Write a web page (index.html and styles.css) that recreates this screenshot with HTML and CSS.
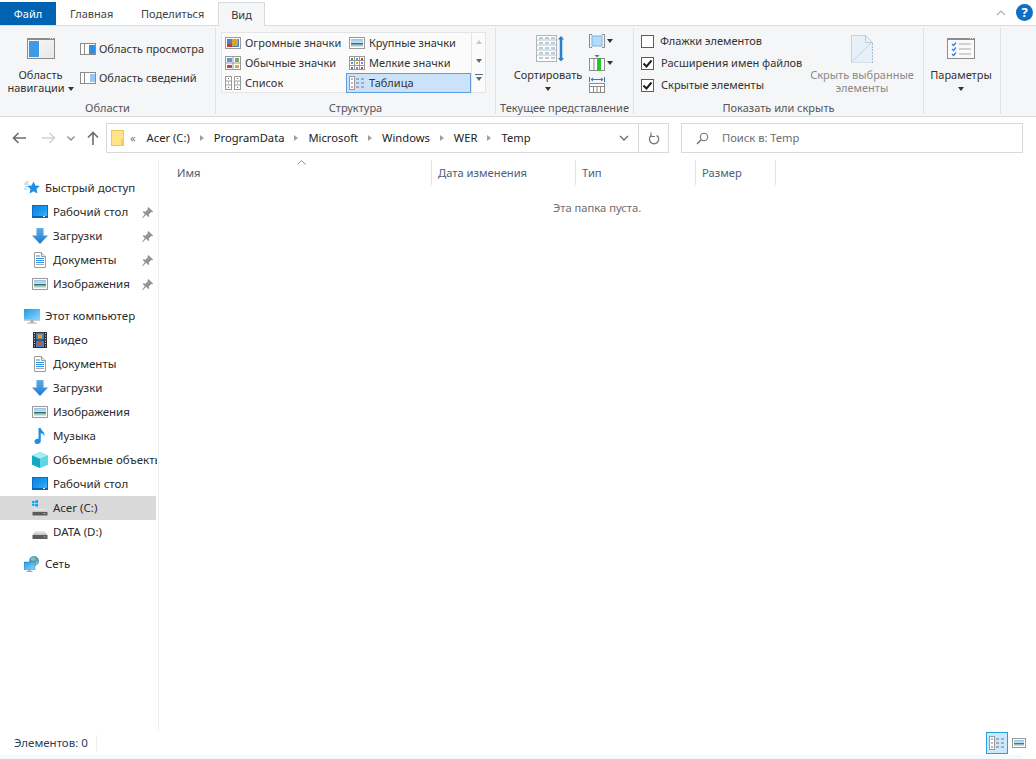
FILE: index.html
```html
<!DOCTYPE html>
<html lang="ru">
<head>
<meta charset="utf-8">
<title>Temp</title>
<link rel="stylesheet" href="styles.css">
</head>
<body>
<svg class="defs" xmlns="http://www.w3.org/2000/svg">
  <defs>
    <linearGradient id="gDesk" x1="0" y1="0" x2="1" y2="1"><stop offset="0" stop-color="#0b7fdc"/><stop offset="0.6" stop-color="#1f9cf0"/><stop offset="1" stop-color="#49b7f5"/></linearGradient>
    <linearGradient id="gArrow" x1="0" y1="0" x2="0" y2="1"><stop offset="0" stop-color="#63aee8"/><stop offset="1" stop-color="#1b78cc"/></linearGradient>
    <linearGradient id="gSky" x1="0" y1="0" x2="0" y2="1"><stop offset="0" stop-color="#8fc4f0"/><stop offset="0.45" stop-color="#c4e0f6"/><stop offset="0.55" stop-color="#2f6f5c"/><stop offset="0.7" stop-color="#7fb0a8"/><stop offset="1" stop-color="#e6f2f8"/></linearGradient>
    <linearGradient id="gScreen" x1="0" y1="0" x2="1" y2="1"><stop offset="0" stop-color="#1c9ae8"/><stop offset="1" stop-color="#8ed6f8"/></linearGradient>
    <linearGradient id="gDrive" x1="0" y1="0" x2="0" y2="1"><stop offset="0" stop-color="#f2f2f2"/><stop offset="1" stop-color="#bfbfbf"/></linearGradient>
    <linearGradient id="gPane" x1="0" y1="0" x2="1" y2="1"><stop offset="0" stop-color="#fafafa"/><stop offset="1" stop-color="#e6e6e6"/></linearGradient>
    <symbol id="i-desk" viewBox="0 0 16 16"><rect x="0.500" y="1.500" width="15" height="12" fill="url(#gDesk)" stroke="#0a6fc4"/><rect x="1" y="12" width="14" height="1.500" fill="#0b5fa8"/><rect x="11" y="12" width="2" height="1" fill="#dff"/></symbol>
    <symbol id="i-down" viewBox="0 0 16 16"><path d="M4.500 0h7v7.500H16L8 16 0 7.500h4.500z" fill="url(#gArrow)"/></symbol>
    <symbol id="i-doc" viewBox="0 0 16 16"><path d="M2.500.5h7l4 4v11h-11z" fill="#fff" stroke="#9c9c9c"/><path d="M9.500.5v4h4" fill="#e8e8e8" stroke="#9c9c9c"/><path d="M4 4h4M4 6.500h8M4 8.500h8M4 10.500h8" stroke="#2f8fe0"/><path d="M4 12.500h8" stroke="#a8a8a8"/></symbol>
    <symbol id="i-pic" viewBox="0 0 16 16"><rect x="0.500" y="2.500" width="15" height="11" fill="#fff" stroke="#9a9a9a"/><rect x="2" y="4" width="12" height="8" fill="url(#gSky)"/></symbol>
    <symbol id="i-pc" viewBox="0 0 16 16"><rect x="0" y="1" width="16" height="10.500" fill="url(#gScreen)"/><rect x="0" y="11.500" width="16" height="1" fill="#8a9aa6"/><rect x="6.500" y="12.500" width="3" height="2" fill="#9aa4ac"/><rect x="3.500" y="14.500" width="9" height="1" fill="#9aa4ac"/></symbol>
    <symbol id="i-video" viewBox="0 0 16 16"><rect x="1" y="0" width="14" height="16" fill="#2e2e2e"/><path d="M2 1.500h1M2 4h1M2 6.500h1M2 9h1M2 11.500h1M2 14h1M13 1.500h1M13 4h1M13 6.500h1M13 9h1M13 11.500h1M13 14h1" stroke="#d8d8d8"/><rect x="4" y="1" width="8" height="6.500" fill="#3f7fd0"/><rect x="4" y="8.500" width="8" height="6.500" fill="#3f7fd0"/><rect x="6" y="2.500" width="4" height="4" fill="#e0a020"/><rect x="6" y="10" width="4" height="4" fill="#c85a30"/></symbol>
    <symbol id="i-music" viewBox="0 0 16 16"><path d="M6.500 0h2.200c.3 2.600 4.300 3.600 3.800 8.500-.6-2-2-3-3.700-3.300V13c0 1.800-1.600 3-3.300 3S2.500 15 2.500 13.400 4.200 10.800 5.500 10.800c.4 0 .7 0 1 .2z" fill="#1e8fe6"/></symbol>
    <symbol id="i-cube" viewBox="0 0 16 16"><path d="M8 0l8 3.500v9L8 16 0 12.500v-9z" fill="#3cc6d8"/><path d="M8 0l8 3.500L8 7 0 3.500z" fill="#a6ecf2"/><path d="M0 3.500L8 7v9L0 12.500z" fill="#12a9c4"/><path d="M8 7l8-3.500v9L8 16z" fill="#5fd6e2"/></symbol>
    <symbol id="i-drive" viewBox="0 0 16 16"><path d="M3 7h10l2.500 4H.5z" fill="url(#gDrive)"/><rect x="0.500" y="11" width="15" height="4" rx="0.500" fill="#5c5c5c"/><rect x="11.500" y="12.500" width="2" height="1" fill="#58e04a"/></symbol>
    <symbol id="i-driveC" viewBox="0 0 16 16"><path d="M3 9h10l2.500 3H.5z" fill="url(#gDrive)"/><rect x="0.500" y="12" width="15" height="3.500" rx="0.500" fill="#5c5c5c"/><rect x="11.500" y="13" width="2" height="1" fill="#58e04a"/><path d="M0 1.200l2.500-.5V3H0zM3.200.6L6 0v3H3.200zM0 3.800h2.500v2.300L0 5.600zM3.200 3.800H6V6.700l-2.800-.5z" fill="#12a0ea"/></symbol>
    <symbol id="i-net" viewBox="0 0 16 16"><circle cx="10" cy="5" r="5" fill="#4f9ad8"/><path d="M7 2l3-1 2 2-2 2-3-1zM11 6l3-1-1 4h-2z" fill="#8cc77a"/><rect x="0" y="6" width="11" height="7.500" fill="url(#gScreen)" stroke="#2a78b8" stroke-width="0.500"/><rect x="4.500" y="13.500" width="2" height="1.500" fill="#9aa4ac"/><rect x="2.500" y="15" width="6" height="1" fill="#9aa4ac"/></symbol>
    <symbol id="i-star" viewBox="0 0 16 16"><path d="M9.500 1.500l1.900 4.100 4.400.5-3.300 3 .9 4.400-3.900-2.200-3.900 2.200.9-4.400-3.300-3 4.400-.5z" fill="#1f8fe6"/><path d="M0 4h4.500M1 6.500h2.500M0 9h3M1.500 2h3" stroke="#8cc6f0"/></symbol>
    <symbol id="i-pin" viewBox="0 0 12 12"><path d="M7 0l5 5-1 1-1-.5-2.500 2.500.5 2-1 1-2.500-2.500L1 12l-1-.2 3.200-3.800L.8 5.600l1-1 2 .5L6.500 2.500 6 1.500z" fill="#8d9399"/></symbol>
    <symbol id="i-list" viewBox="0 0 16 14"><rect x="0.500" y="0.500" width="5" height="13" fill="#fff" stroke="#9a9a9a"/><path d="M2 3h2M2 7h2" stroke="#777"/><path d="M2 11h2" stroke="#d33"/><path d="M7 3h3M12 3h3M7 7h3M12 7h3M7 11h3M12 11h3" stroke="#777"/></symbol>
    <symbol id="i-check" viewBox="0 0 13 13"><rect x="0.500" y="0.500" width="12" height="12" fill="#fff" stroke="#44618c"/><path d="M2.500 6.500l3 3 5-6" fill="none" stroke="#1f1f1f" stroke-width="2"/></symbol>
  </defs>
</svg>

<div class="window">
  <nav class="tabs">
    <span class="tab tab-file">Файл</span>
    <span class="tab tab-home">Главная</span>
    <span class="tab tab-share">Поделиться</span>
    <span class="tab tab-active">Вид</span>
    <span class="tab-spacer"></span>
    <svg class="chev-up" width="10" height="6" viewBox="0 0 10 6"><path d="M1 5l4-4 4 4" fill="none" stroke="#b4b4b4" stroke-width="1.200"/></svg>
    <span class="help">?</span>
  </nav>

  <section class="ribbon">
    <div class="group g-panes">
      <div class="group-body">
        <div class="big big-nav">
          <svg class="big-icon" width="28" height="21" viewBox="0 0 28 21"><rect x="0.500" y="0.500" width="27" height="20" fill="url(#gPane)" stroke="#8c8c8c"/><rect x="0" y="0" width="28" height="2" fill="#8c8c8c"/><rect x="2" y="3" width="10" height="16" fill="#3f9ae6"/><rect x="12" y="2" width="1" height="17" fill="#fff"/><path d="M23 .5h1M25 .5h1" stroke="#e8e8e8"/></svg>
          <span class="big-text">Область<br>навигации <i class="caret"></i></span>
        </div>
        <div class="stack-panes">
          <div class="small"><svg width="16" height="12" viewBox="0 0 16 12"><rect x="0.500" y="0.500" width="15" height="11" fill="#fff" stroke="#8c8c8c"/><rect x="4" y="1" width="1" height="10" fill="#8c8c8c"/><rect x="9" y="2" width="6" height="9" fill="#2f8fe0"/></svg><span>Область просмотра</span></div>
          <div class="small"><svg width="16" height="12" viewBox="0 0 16 12"><rect x="0.500" y="0.500" width="15" height="11" fill="#fff" stroke="#8c8c8c"/><rect x="4" y="1" width="1" height="10" fill="#8c8c8c"/><path d="M10 3h5M10 5h5M10 7h5M10 9h5" stroke="#2f8fe0"/></svg><span>Область сведений</span></div>
        </div>
      </div>
      <div class="group-label">Области</div>
    </div>

    <div class="group g-layout">
      <div class="group-body">
        <div class="gallery">
          <div class="gallery-grid">
            <div class="g-item"><svg width="16" height="12" viewBox="0 0 16 12"><rect x="0.500" y="0.500" width="15" height="11" fill="#fff" stroke="#9a9a9a"/><rect x="2" y="2" width="12" height="8" fill="#4f7fc4"/><rect x="7" y="2" width="6" height="7" fill="#d9a820"/><rect x="2" y="7" width="5" height="3" fill="#c43c30"/></svg><span>Огромные значки</span></div>
            <div class="g-item"><svg width="16" height="12" viewBox="0 0 16 12"><rect x="0.500" y="0.500" width="15" height="11" fill="#fff" stroke="#9a9a9a"/><rect x="2" y="2" width="12" height="8" fill="url(#gSky)"/></svg><span>Крупные значки</span></div>
            <div class="g-item"><svg width="16" height="14" viewBox="0 0 16 14"><rect x="0.500" y="0.500" width="15" height="13" fill="#fff" stroke="#9a9a9a"/><path d="M8 0v14M0 7h16" stroke="#9a9a9a"/><rect x="2" y="2" width="5" height="4" fill="#5a98d8"/><rect x="10" y="2" width="4" height="4" fill="#78a868"/><rect x="2" y="9" width="5" height="3" fill="#c8443c"/><rect x="10" y="9" width="4" height="3" fill="#d8a830"/></svg><span>Обычные значки</span></div>
            <div class="g-item"><svg width="16" height="14" viewBox="0 0 16 14"><rect x="0.500" y="0.500" width="15" height="13" fill="#fff" stroke="#9a9a9a"/><path d="M5.500 0v14M10.500 0v14M0 4.500h16M0 9.500h16" stroke="#9a9a9a"/><rect x="2" y="2" width="2" height="2" fill="#5a8868"/><rect x="7" y="2" width="2" height="2" fill="#5a98d8"/><rect x="12" y="2" width="2" height="2" fill="#c8443c"/><rect x="2" y="6" width="2" height="2" fill="#5a98d8"/><rect x="7" y="6" width="2" height="2" fill="#d8a830"/><rect x="12" y="6" width="2" height="2" fill="#5a98d8"/><rect x="2" y="11" width="2" height="2" fill="#5a8868"/><rect x="7" y="11" width="2" height="2" fill="#5a98d8"/><rect x="12" y="11" width="2" height="2" fill="#c8443c"/></svg><span>Мелкие значки</span></div>
            <div class="g-item"><svg width="16" height="14" viewBox="0 0 16 14"><rect x="0.500" y="0.500" width="6" height="13" fill="#fff" stroke="#9a9a9a"/><rect x="9.500" y="0.500" width="6" height="13" fill="#fff" stroke="#9a9a9a"/><path d="M0 5h7M0 9h7M9 5h7M9 9h7" stroke="#9a9a9a"/><path d="M3 2.500h1M3 7h1M12 2.500h1M12 7h1" stroke="#666"/><path d="M3 11.500h1M12 11.500h1" stroke="#d33"/></svg><span>Список</span></div>
            <div class="g-item g-selected"><svg width="16" height="14"><use href="#i-list"/></svg><span>Таблица</span></div>
          </div>
          <div class="gallery-scroll">
            <i class="tri tri-up"></i>
            <i class="tri tri-down"></i>
            <i class="tri-more"></i>
          </div>
        </div>
      </div>
      <div class="group-label">Структура</div>
    </div>

    <div class="group g-view">
      <div class="group-body">
        <div class="big big-sort">
          <svg class="big-icon" width="28" height="28" viewBox="0 0 28 28"><rect x="0.500" y="0.500" width="20" height="26" fill="#fff" stroke="#b0b4b8"/><path d="M1 5h19M1 10h19M1 15h19M1 20h19" stroke="#cfe3ec" stroke-width="2"/><path d="M3 3h4M9 3h4M15 3h4M3 8h4M9 8h4M15 8h4M3 13h4M9 13h4M15 13h4M3 18h4M9 18h4M15 18h4M3 23h4M9 23h4M15 23h4" stroke="#8c9198"/><path d="M25 2v23" stroke="#2a7fc8" stroke-width="2.500"/><path d="M22 4.500L25 1l3 3.500zM22 23L25 26.500 28 23z" fill="#2a7fc8"/></svg>
          <span class="big-text">Сортировать<br><i class="caret"></i></span>
        </div>
        <div class="stack-view">
          <div class="tool"><svg width="16" height="14" viewBox="0 0 16 14"><path d="M3 .5H.5v13H3M13 .5h2.500v13H13" fill="none" stroke="#8c8c8c"/><rect x="3" y="2" width="10" height="10" fill="#b4dcfa" stroke="#7ab4e4"/></svg><i class="caret"></i></div>
          <div class="tool"><svg width="16" height="16" viewBox="0 0 16 16"><path d="M5.500 0h5L8 2.500z" fill="#2a7fc8"/><rect x="0.500" y="3.500" width="15" height="12" fill="#fff" stroke="#8c8c8c"/><path d="M5 4v11" stroke="#8c8c8c"/><rect x="8" y="3" width="4" height="13" fill="#2fc02f"/></svg><i class="caret"></i></div>
          <div class="tool"><svg width="16" height="16" viewBox="0 0 16 16"><path d="M.5 0v5M15.500 0v5M2 2.500h12" stroke="#2a7fc8"/><path d="M4 .5L1.500 2.500 4 4.500zM12 .5l2.500 2L12 4.500z" fill="#2a7fc8"/><rect x="0.500" y="6.500" width="15" height="9" fill="#fff" stroke="#8c8c8c"/><path d="M0 9.500h16M4.500 9v7M8 9v7M11.500 9v7" stroke="#8c8c8c"/></svg></div>
        </div>
      </div>
      <div class="group-label">Текущее представление</div>
    </div>

    <div class="group g-show">
      <div class="group-body">
        <div class="checks">
          <div class="check"><svg width="13" height="13" viewBox="0 0 13 13"><rect x="0.500" y="0.500" width="12" height="12" fill="#fff" stroke="#44618c"/></svg><span class="chk-flag">Флажки элементов</span></div>
          <div class="check"><svg width="13" height="13"><use href="#i-check"/></svg><span>Расширения имен файлов</span></div>
          <div class="check"><svg width="13" height="13"><use href="#i-check"/></svg><span>Скрытые элементы</span></div>
        </div>
        <div class="big big-hide">
          <svg class="big-icon" width="22" height="28" viewBox="0 0 22 28"><path d="M.5.500h14l7 7v20H.5z" fill="#e7eff9"/><path d="M14.500.500v7h7M21.500 8v20H1" fill="none" stroke="#a8bcd2" stroke-dasharray="2 1"/><path d="M.5 27L20 8" stroke="#c4d2e2"/><path d="M.5.500h14l7 7" fill="none" stroke="#c4d2e2"/><path d="M.5.500v27" stroke="#c4d2e2"/></svg>
          <span class="big-text">Скрыть выбранные<br>элементы</span>
        </div>
      </div>
      <div class="group-label">Показать или скрыть</div>
    </div>

    <div class="group g-options">
      <div class="group-body">
        <div class="big big-opts">
          <svg class="big-icon" width="28" height="21" viewBox="0 0 28 21"><rect x="0.500" y="0.500" width="27" height="20" fill="#fafafa" stroke="#8c8c8c"/><rect x="0" y="0" width="28" height="2" fill="#8c8c8c"/><path d="M23 .5h1M25 .5h1" stroke="#e8e8e8"/><path d="M5 6l1.500 1.500L9 4.500M5 11l1.500 1.500L9 9.500M5 16l1.500 1.500L9 14.500" fill="none" stroke="#2a86d8" stroke-width="1.300"/><path d="M12 6h12M12 11h12M12 16h12" stroke="#a8a8a8"/></svg>
          <span class="big-text">Параметры<br><i class="caret"></i></span>
        </div>
      </div>
    </div>
  </section>

  <section class="navbar">
    <div class="nav-buttons">
      <svg class="nb nb-back" width="14" height="12" viewBox="0 0 14 12"><path d="M6.500 1L1.500 6l5 5M2 6h12" fill="none" stroke="#6d6d6d" stroke-width="1.600"/></svg>
      <svg class="nb nb-fwd" width="14" height="12" viewBox="0 0 14 12"><path d="M7.500 1l5 5-5 5M12 6H0" fill="none" stroke="#d2d2d2" stroke-width="1.600"/></svg>
      <svg class="nb nb-menu" width="8" height="5" viewBox="0 0 8 5"><path d="M.5.500L4 4 7.500.500" fill="none" stroke="#8a8a8a" stroke-width="1.300"/></svg>
      <svg class="nb nb-up" width="12" height="14" viewBox="0 0 12 14"><path d="M1 6.500l5-5 5 5M6 2v12" fill="none" stroke="#6d6d6d" stroke-width="1.600"/></svg>
    </div>
    <div class="address">
      <svg class="folder" width="13" height="16" viewBox="0 0 13 16"><rect x="0.500" y="0.500" width="12" height="15" fill="#ffe38a" stroke="#e9c75a"/><rect x="10" y="9" width="2.500" height="6.500" fill="#f6cf60"/></svg>
      <span class="chevrons">«</span>
      <span class="crumb">Acer (C:)</span><i class="sep"></i>
      <span class="crumb">ProgramData</span><i class="sep"></i>
      <span class="crumb">Microsoft</span><i class="sep"></i>
      <span class="crumb">Windows</span><i class="sep"></i>
      <span class="crumb">WER</span><i class="sep"></i>
      <span class="crumb">Temp</span>
      <span class="addr-fill"></span>
      <svg class="addr-drop" width="10" height="6" viewBox="0 0 10 6"><path d="M1 1l4 4 4-4" fill="none" stroke="#6d6d6d" stroke-width="1.300"/></svg>
      <span class="refresh"><svg width="12" height="13" viewBox="0 0 12 13"><path d="M8.700 3.400A4.600 4.600 0 1 1 3.400 3.400" fill="none" stroke="#7a7a7a" stroke-width="1.300"/><path d="M3 .5v4h4" fill="none" stroke="#7a7a7a" stroke-width="1.100"/></svg></span>
    </div>
    <div class="search">
      <svg width="13" height="13" viewBox="0 0 13 13"><circle cx="8" cy="5" r="3.800" fill="none" stroke="#6d6d6d"/><path d="M5.200 7.800L1 12" stroke="#6d6d6d" stroke-width="1.300"/></svg>
      <span>Поиск в: Temp</span>
    </div>
  </section>

  <section class="content">
    <aside class="sidebar">
      <div class="nav-row lvl1"><svg width="16" height="16"><use href="#i-star"/></svg><span>Быстрый доступ</span></div>
      <div class="nav-row lvl2"><svg width="16" height="16"><use href="#i-desk"/></svg><span>Рабочий стол</span><svg class="pin" width="11" height="11"><use href="#i-pin"/></svg></div>
      <div class="nav-row lvl2"><svg width="16" height="16"><use href="#i-down"/></svg><span>Загрузки</span><svg class="pin" width="11" height="11"><use href="#i-pin"/></svg></div>
      <div class="nav-row lvl2"><svg width="16" height="16"><use href="#i-doc"/></svg><span>Документы</span><svg class="pin" width="11" height="11"><use href="#i-pin"/></svg></div>
      <div class="nav-row lvl2"><svg width="16" height="16"><use href="#i-pic"/></svg><span>Изображения</span><svg class="pin" width="11" height="11"><use href="#i-pin"/></svg></div>
      <div class="nav-row lvl1 gap"><svg width="16" height="16"><use href="#i-pc"/></svg><span>Этот компьютер</span></div>
      <div class="nav-row lvl2"><svg width="16" height="16"><use href="#i-video"/></svg><span>Видео</span></div>
      <div class="nav-row lvl2"><svg width="16" height="16"><use href="#i-doc"/></svg><span>Документы</span></div>
      <div class="nav-row lvl2"><svg width="16" height="16"><use href="#i-down"/></svg><span>Загрузки</span></div>
      <div class="nav-row lvl2"><svg width="16" height="16"><use href="#i-pic"/></svg><span>Изображения</span></div>
      <div class="nav-row lvl2"><svg width="16" height="16"><use href="#i-music"/></svg><span>Музыка</span></div>
      <div class="nav-row lvl2"><svg width="16" height="16"><use href="#i-cube"/></svg><span>Объемные объекты</span></div>
      <div class="nav-row lvl2"><svg width="16" height="16"><use href="#i-desk"/></svg><span>Рабочий стол</span></div>
      <div class="nav-row lvl2 selected"><svg width="16" height="16"><use href="#i-driveC"/></svg><span>Acer (C:)</span></div>
      <div class="nav-row lvl2"><svg width="16" height="16"><use href="#i-drive"/></svg><span>DATA (D:)</span></div>
      <div class="nav-row lvl1 gap"><svg width="16" height="16"><use href="#i-net"/></svg><span>Сеть</span></div>
    </aside>
    <main class="files">
      <div class="file-head">
        <div class="col col-name">Имя<svg class="sort" width="9" height="5" viewBox="0 0 9 5"><path d="M.5 4.500l4-4 4 4" fill="none" stroke="#8a8a8a"/></svg></div>
        <div class="col col-date">Дата изменения</div>
        <div class="col col-type">Тип</div>
        <div class="col col-size">Размер</div>
      </div>
      <div class="empty">Эта папка пуста.</div>
    </main>
  </section>

  <footer class="status">
    <span class="count">Элементов: 0</span>
    <span class="status-fill"></span>
    <span class="view-btn view-on"><svg width="16" height="14"><use href="#i-list"/></svg></span>
    <span class="view-btn"><svg width="15" height="13" viewBox="0 0 15 13"><rect x="0.500" y="1.500" width="13" height="9" fill="#fff" stroke="#9a9a9a"/><rect x="2" y="3" width="10" height="6" fill="url(#gSky)"/></svg></span>
  </footer>
  <div class="strip"></div>
</div>
</body>
</html>
```

FILE: styles.css
```css
* { box-sizing: border-box; }
html, body { margin: 0; padding: 0; height: 100%; background: #fff; overflow: hidden; }
body { font-family: "Noto Sans", "Open Sans", "Liberation Sans", sans-serif; font-size: 11.5px; color: #2b2b2b; line-height: 16px; }
.defs { display: block; width: 0; height: 0; }
svg { display: block; flex: none; }
.window { display: flex; flex-direction: column; height: 759px; width: 1036px; }

/* tabs */
.tabs { height: 26px; display: flex; align-items: flex-end; border-bottom: 1px solid #dadbdc; flex: none; font-size: 11px; }
.tab { height: 23px; line-height: 24px; text-align: center; color: #444; }
.tab-file { width: 56px; background: #0063b1; color: #fff; }
.tab-home { margin-left: 14px; width: 42px; white-space: nowrap; }
.tab-share { margin-left: 29px; width: 63px; white-space: nowrap; }
.tab-active { margin-left: 14px; width: 47px; height: 24px; margin-bottom: -1px; background: #f5f6f7; border: 1px solid #dadbdc; border-bottom: 0; color: #333; }
.tab-spacer { flex: 1; }
.chev-up { align-self: center; margin-right: 10px; }
.help { align-self: center; width: 17px; height: 17px; margin-right: 3px; border-radius: 50%; background: #0f6fc6; color: #fff; font-weight: 700; font-size: 13px; line-height: 17px; text-align: center; margin-top: -1px; }

/* ribbon */
.ribbon { height: 91px; flex: none; display: flex; background: #f5f6f7; border-bottom: 1px solid #dadbdc; padding-bottom: 2px; font-size: 11px; }
.group { position: relative; display: flex; flex-direction: column; border-right: 1px solid #e1e2e3; margin-top: 2px; flex: none; }
.group-body { flex: 1; display: flex; min-height: 0; }
.group-label { height: 19px; padding-top: 5px; line-height: 16px; text-align: center; color: #555; white-space: nowrap; }
.g-panes { width: 216px; }
.g-layout { width: 280px; }
.g-view { width: 138px; }
.g-show { width: 290px; }
.g-options { width: 77px; }

.big { display: flex; flex-direction: column; align-items: center; text-align: center; color: #333; white-space: nowrap; }
.big-text { line-height: 13px; display: block; }
.caret { display: inline-block; width: 0; height: 0; border-left: 3.500px solid transparent; border-right: 3.500px solid transparent; border-top: 4px solid #333; vertical-align: middle; }

.big-nav { width: 67px; margin-left: 7px; padding-top: 10px; }
.big-nav .big-text { margin-top: 9px; }
.stack-panes { margin-left: 6px; padding-top: 13px; display: flex; flex-direction: column; gap: 13px; }
.small { display: flex; align-items: center; gap: 3px; height: 16px; white-space: nowrap; color: #333; }

.gallery { margin: 4px 0 0 5px; width: 265px; height: 61px; display: flex; background: #fbfbfc; border: 1px solid #e4e5e6; }
.gallery-grid { width: 249px; display: grid; grid-template-columns: 124px 125px; grid-auto-rows: 20px; }
.g-item { display: flex; align-items: center; gap: 4px; padding-left: 3px; white-space: nowrap; color: #333; }
.g-selected { background: #cbe3fa; border: 1px solid #5c9ede; padding-left: 2px; }
.gallery-scroll { flex: 1; border-left: 1px solid #e4e5e6; display: flex; flex-direction: column; }
.tri, .tri-more { align-self: center; display: block; width: 0; height: 0; border-left: 3.500px solid transparent; border-right: 3.500px solid transparent; }
.tri-up { margin-top: 7px; border-bottom: 4px solid #c4c8cc; }
.tri-down { margin-top: 15px; border-top: 4px solid #5a6a7a; }
.tri-more { margin-top: 14px; border-top: 4px solid #5a6a7a; position: relative; }
.tri-more::before { content: ""; position: absolute; left: -4px; top: -7px; width: 8px; height: 1px; background: #5a6a7a; }

.big-sort { width: 80px; margin-left: 12px; padding-top: 7px; }
.big-sort .big-icon { margin-left: 3px; }
.big-sort .big-text { margin-top: 5px; line-height: 13px; }
.stack-view { margin-left: 1px; padding-top: 4px; display: flex; flex-direction: column; gap: 5px; }
.tool { display: flex; align-items: center; gap: 2px; height: 17px; }

.checks { padding: 5px 0 0 7px; width: 170px; display: flex; flex-direction: column; gap: 6px; }
.check { display: flex; align-items: center; height: 16px; gap: 7px; white-space: nowrap; color: #333; }
.chk-flag { margin-left: -1px; }
.big-hide { width: 110px; margin-left: 3px; padding-top: 7px; color: #8a8a8a; }
.big-hide .big-text { margin-top: 5px; }
.big-opts { width: 74px; padding-top: 10px; }
.big-opts .big-text { margin-top: 9px; }

/* navbar */
.navbar { height: 43px; flex: none; padding-top: 6px; display: flex; align-items: flex-start; }
.nav-buttons { width: 106px; height: 30px; display: flex; align-items: center; flex: none; }
.nb-back { margin-left: 12px; }
.nb-fwd { margin-left: 16px; }
.nb-menu { margin-left: 11px; }
.nb-up { margin-left: 12px; }
.address { width: 563px; height: 30px; flex: none; border: 1px solid #d9d9d9; display: flex; align-items: center; padding-left: 4px; color: #222; font-size: 11.2px; }
.folder { margin-right: 6px; }
.chevrons { color: #777; margin-right: 11px; font-size: 11px; }
.crumb { white-space: nowrap; }
.sep { display: block; width: 0; height: 0; margin: 0 10px; border-left: 4px solid #a0a0a0; border-top: 3px solid transparent; border-bottom: 3px solid transparent; }
.addr-fill { flex: 1; }
.addr-drop { margin-right: 9px; }
.refresh { width: 30px; height: 28px; border-left: 1px solid #d9d9d9; display: flex; align-items: center; justify-content: center; }
.search { margin-left: 12px; width: 342px; height: 30px; flex: none; border: 1px solid #d9d9d9; display: flex; align-items: center; padding-left: 14px; gap: 13px; color: #6d6d6d; font-size: 11.2px; }

/* content */
.content { flex: 1; display: flex; min-height: 0; }
.sidebar { width: 159px; flex: none; border-right: 1px solid #f0f0f0; padding-top: 16px; overflow: hidden; }
.nav-row { height: 24px; width: 157px; display: flex; align-items: center; white-space: nowrap; overflow: hidden; color: #2b2b2b; position: relative; }
.lvl1 { padding-left: 24px; gap: 5px; }
.lvl2 { padding-left: 32px; gap: 5px; }
.gap { margin-top: 8px; }
.selected { background: #d9d9d9; width: 156px; }
.pin { margin-left: auto; margin-right: 4px; }
.files { flex: 1; min-width: 0; font-size: 11.2px; }
.file-head { height: 25px; display: flex; color: #4c607a; }
.col { border-right: 1px solid #e5e5e5; padding-left: 6px; line-height: 25px; flex: none; }
.col-name { width: 273px; padding-left: 18px; position: relative; }
.sort { position: absolute; left: 138px; top: 0; }
.col-date { width: 144px; }
.col-type { width: 120px; }
.col-size { width: 80px; }
.empty { margin-top: 15px; padding-left: 394px; color: #6d6d6d; line-height: 16px; }

/* status */
.status { height: 24px; flex: none; display: flex; align-items: center; color: #2d3e5a; }
.count { width: 97px; padding-left: 14px; border-right: 1px solid #eee; white-space: nowrap; line-height: 16px; }
.status-fill { flex: 1; }
.view-btn { display: flex; align-items: center; justify-content: center; width: 22px; height: 22px; margin-right: 9px; }
.view-btn:last-child { width: 15px; margin-left: -5px; }
.view-on { background: #cce8ff; border: 1px solid #26a0da; }
.strip { height: 4px; width: 1022px; flex: none; background: #f5f9fd; }
```
